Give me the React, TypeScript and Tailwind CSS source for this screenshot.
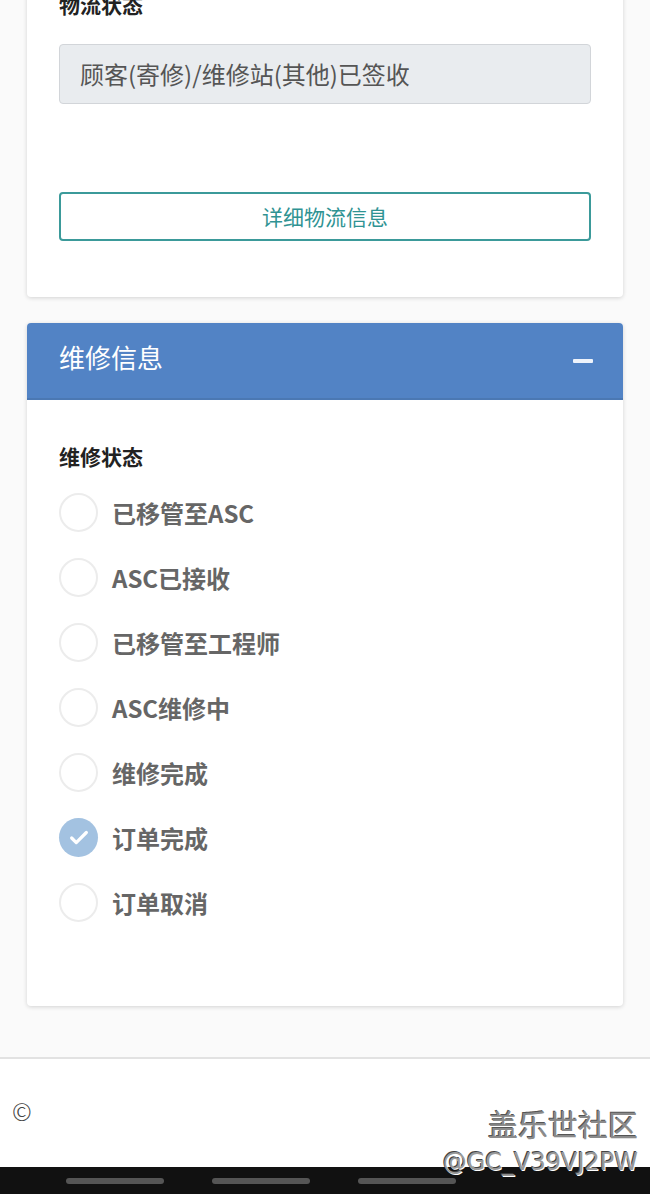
import { Check } from "lucide-react";

const statuses = [
  { label: "已移管至ASC", checked: false },
  { label: "ASC已接收", checked: false },
  { label: "已移管至工程师", checked: false },
  { label: "ASC维修中", checked: false },
  { label: "维修完成", checked: false },
  { label: "订单完成", checked: true },
  { label: "订单取消", checked: false },
];

const font = "font-['Noto_Sans_CJK_SC','Noto_Sans',sans-serif]";

export default function App() {
  return (
    <div className={`relative h-[1194px] overflow-hidden bg-[#fafafa] ${font}`}>
      <div className="px-[27px]">
        {/* logistics card */}
        <div className="-mt-[9px] rounded-b-[4px] bg-white px-8 pb-[56px] shadow-[0_1px_4px_rgba(0,0,0,0.16)]">
          <div className="text-[21px] font-bold leading-[27px] text-[#222]">物流状态</div>
          <div className="mt-[26px] flex h-[60px] items-center rounded-[4px] border border-[#d2d5d9] bg-[#e9ecef] px-[20px] text-[24px] text-[#555]">
            顾客(寄修)/维修站(其他)已签收
          </div>
          <button className="mt-[88px] flex h-[49px] w-full items-center justify-center rounded-[4px] border-2 border-[#3b9a9a] bg-white text-[21px] text-[#2f9393]">
            详细物流信息
          </button>
        </div>

        {/* repair card */}
        <div className="mt-[26px] rounded-[4px] bg-white shadow-[0_1px_4px_rgba(0,0,0,0.16)]">
          <div className="flex h-[77px] items-center justify-between rounded-t-[4px] border-b-2 border-[#4b78b3] bg-[#5283c5] px-8">
            <span className="pb-[8px] text-[26px] text-white">维修信息</span>
            <span className="mr-[-2px] h-[4px] w-[20px] rounded-[1px] bg-[#eef3fb]" />
          </div>
          <div className="px-8 pt-[42px] pb-[71px]">
            <div className="text-[21px] font-bold leading-[28px] text-[#222]">维修状态</div>
            <div className="mt-[10px]">
              {statuses.map((s) => (
                <div key={s.label} className="flex h-[65px] items-center">
                  {s.checked ? (
                    <span className="flex h-[39px] w-[39px] items-center justify-center rounded-full bg-[#a3c2e1]">
                      <Check className="h-[22px] w-[22px] text-white" strokeWidth={3.5} />
                    </span>
                  ) : (
                    <span className="h-[39px] w-[39px] rounded-full border-2 border-[#ececec] bg-white" />
                  )}
                  <span className="ml-[14px] text-[24px] font-bold text-[#666]">{s.label}</span>
                </div>
              ))}
            </div>
          </div>
        </div>
      </div>

      {/* footer */}
      <div className="mt-[51px] h-[110px] border-t-2 border-[#e2e2e2] bg-white">
        <div className="pl-[12px] pt-[40px] text-[24px] font-light leading-none text-[#444]">©</div>
      </div>
      <div className="flex h-[27px] items-center gap-[48px] bg-[#111] pl-[66px]">
        <span className="h-[6px] w-[98px] rounded-full bg-[#555]" />
        <span className="h-[6px] w-[98px] rounded-full bg-[#555]" />
        <span className="h-[6px] w-[98px] rounded-full bg-[#555]" />
      </div>

      {/* watermark */}
      <div className="absolute right-[12px] bottom-[20px] flex flex-col items-end leading-none">
        <span className="text-[30px] text-[#8a8a8a] [text-shadow:1px_1px_0_#fff,-1px_-1px_0_#555]">盖乐世社区</span>
        <span className="mt-[12px] font-['DejaVu_Sans',sans-serif] text-[24px] text-[#999] [text-shadow:1px_1px_0_#fff,-1px_-1px_0_#444]">
          @GC_V39VJ2PW
        </span>
      </div>
    </div>
  );
}
